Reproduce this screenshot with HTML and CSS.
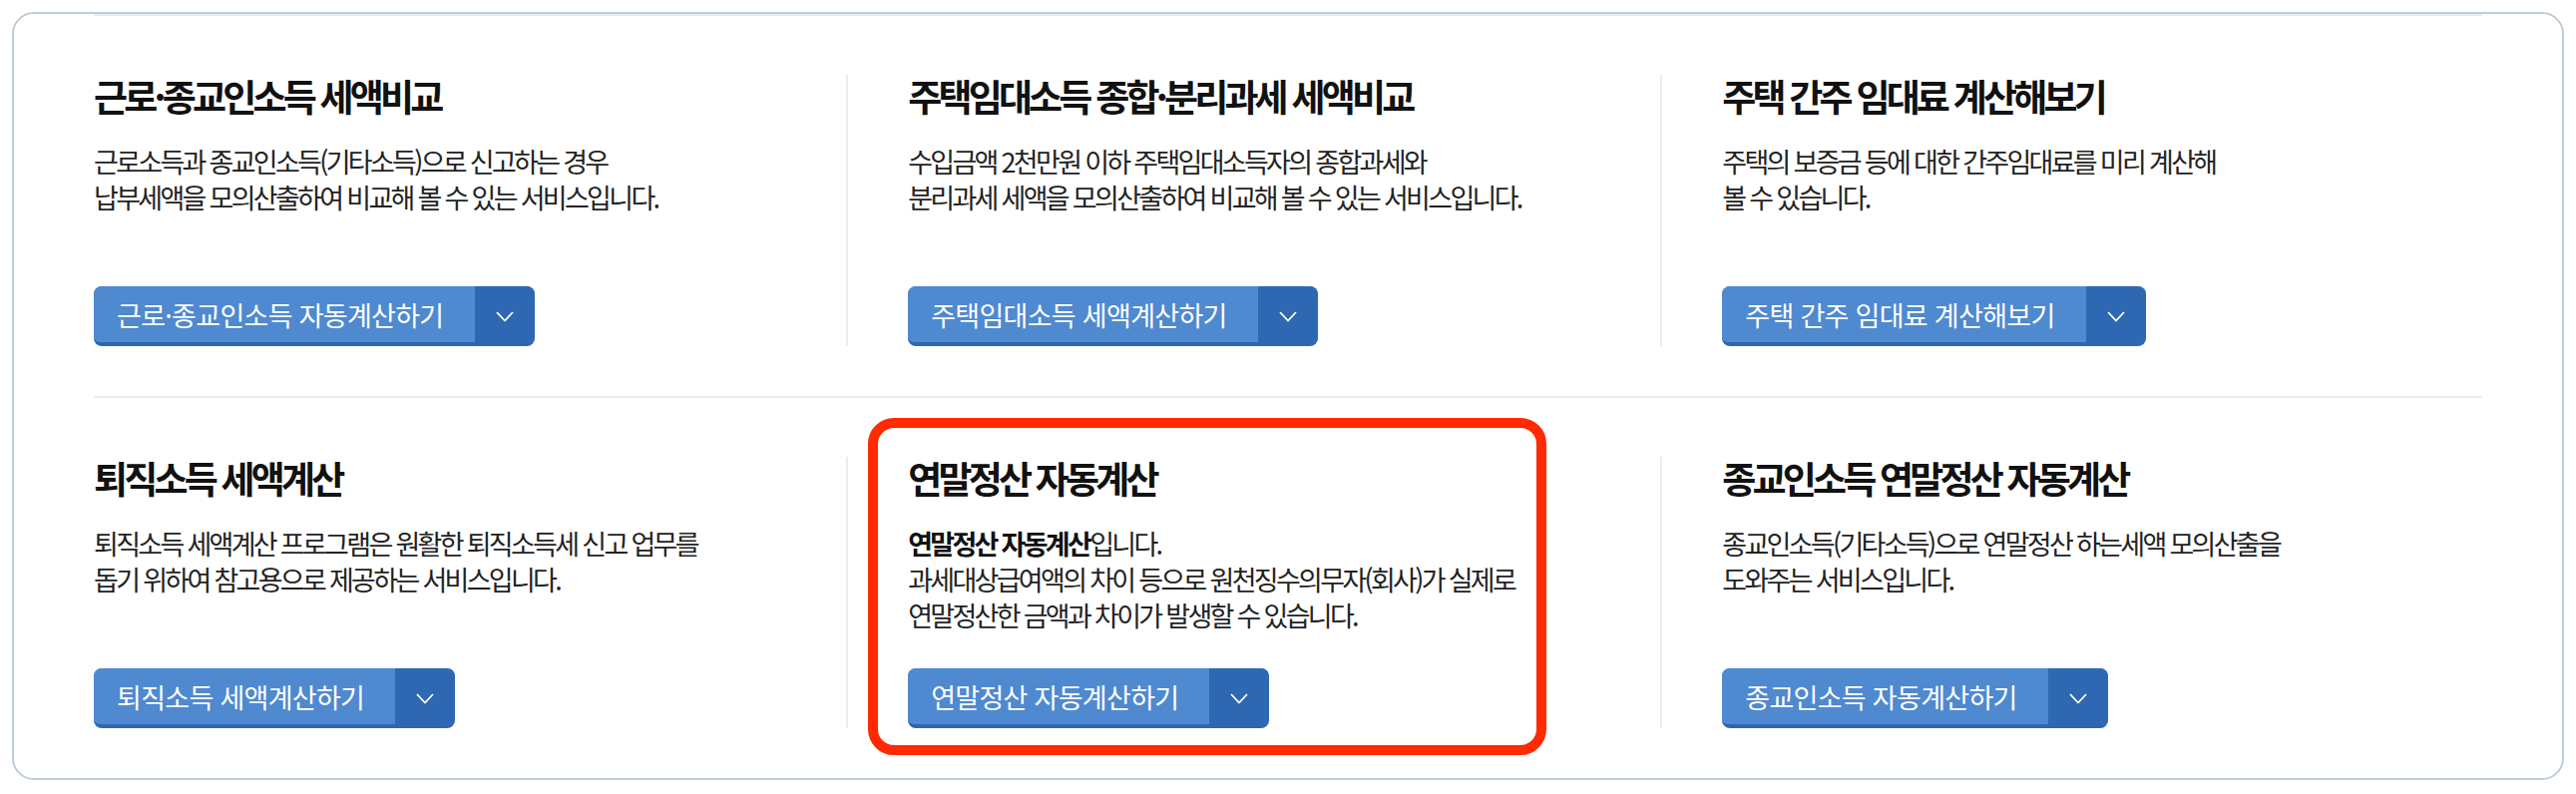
FILE: index.html
```html
<!DOCTYPE html>
<html lang="ko">
<head>
<meta charset="utf-8">
<title>세액계산 서비스</title>
<link rel="stylesheet" href="styles.css">
</head>
<body>
<div class="panel">
  <div class="row">
    <div class="item">
      <h3 class="title">근로·종교인소득 세액비교</h3>
      <p class="desc">근로소득과 종교인소득(기타소득)으로 신고하는 경우<br>납부세액을 모의산출하여 비교해 볼 수 있는 서비스입니다.</p>
      <div class="btn"><span class="btn-label">근로·종교인소득 자동계산하기</span><span class="btn-toggle"><svg width="18" height="11" viewBox="0 0 18 11"><polyline points="1,1 9,9.5 17,1" fill="none" stroke="#fff" stroke-width="1.8"/></svg></span></div>
    </div>
    <div class="item">
      <h3 class="title">주택임대소득 종합·분리과세 세액비교</h3>
      <p class="desc">수입금액 2천만원 이하 주택임대소득자의 종합과세와<br>분리과세 세액을 모의산출하여 비교해 볼 수 있는 서비스입니다.</p>
      <div class="btn"><span class="btn-label">주택임대소득 세액계산하기</span><span class="btn-toggle"><svg width="18" height="11" viewBox="0 0 18 11"><polyline points="1,1 9,9.5 17,1" fill="none" stroke="#fff" stroke-width="1.8"/></svg></span></div>
    </div>
    <div class="item item-wide">
      <h3 class="title">주택 간주 임대료 계산해보기</h3>
      <p class="desc">주택의 보증금 등에 대한 간주임대료를 미리 계산해<br>볼 수 있습니다.</p>
      <div class="btn"><span class="btn-label">주택 간주 임대료 계산해보기</span><span class="btn-toggle"><svg width="18" height="11" viewBox="0 0 18 11"><polyline points="1,1 9,9.5 17,1" fill="none" stroke="#fff" stroke-width="1.8"/></svg></span></div>
    </div>
  </div>
  <div class="row">
    <div class="item">
      <h3 class="title">퇴직소득 세액계산</h3>
      <p class="desc">퇴직소득 세액계산 프로그램은 원활한 퇴직소득세 신고 업무를<br>돕기 위하여 참고용으로 제공하는 서비스입니다.</p>
      <div class="btn"><span class="btn-label">퇴직소득 세액계산하기</span><span class="btn-toggle"><svg width="18" height="11" viewBox="0 0 18 11"><polyline points="1,1 9,9.5 17,1" fill="none" stroke="#fff" stroke-width="1.8"/></svg></span></div>
    </div>
    <div class="item item-marked">
      <span class="highlight"></span>
      <h3 class="title">연말정산 자동계산</h3>
      <p class="desc"><strong>연말정산 자동계산</strong>입니다.<br>과세대상급여액의 차이 등으로 원천징수의무자(회사)가 실제로<br>연말정산한 금액과 차이가 발생할 수 있습니다.</p>
      <div class="btn"><span class="btn-label">연말정산 자동계산하기</span><span class="btn-toggle"><svg width="18" height="11" viewBox="0 0 18 11"><polyline points="1,1 9,9.5 17,1" fill="none" stroke="#fff" stroke-width="1.8"/></svg></span></div>
    </div>
    <div class="item item-wide">
      <h3 class="title">종교인소득 연말정산 자동계산</h3>
      <p class="desc">종교인소득(기타소득)으로 연말정산 하는세액 모의산출을<br>도와주는 서비스입니다.</p>
      <div class="btn"><span class="btn-label">종교인소득 자동계산하기</span><span class="btn-toggle"><svg width="18" height="11" viewBox="0 0 18 11"><polyline points="1,1 9,9.5 17,1" fill="none" stroke="#fff" stroke-width="1.8"/></svg></span></div>
    </div>
  </div>
</div>
</body>
</html>
```

FILE: styles.css
```css
html, body {
  margin: 0;
  padding: 0;
  background: #ffffff;
}

body {
  padding: 12px;
  font-family: "Noto Sans CJK KR", "Noto Sans", sans-serif;
  color: #222;
}

.panel {
  border: 2px solid #bfcdd8;
  border-radius: 22px;
  padding: 0 80px;
  background: #fff;
}

.row {
  display: flex;
  border-top: 2px solid #ececec;
  padding: 59px 0 50px;
}

.item {
  flex: 1 1 0;
  min-width: 0;
  height: 272px;
  display: flex;
  flex-direction: column;
  align-items: flex-start;
  position: relative;
}

.item + .item {
  border-left: 2px solid #ececec;
  padding-left: 60px;
}

.item-wide {
  flex-grow: 1.01;
}

.title {
  margin: 0 0 26px;
  font-size: 37px;
  line-height: 43px;
  font-weight: 700;
  letter-spacing: -3.8px;
  color: #111;
  white-space: nowrap;
}

.desc {
  margin: 0;
  font-size: 27px;
  line-height: 36px;
  font-weight: 400;
  letter-spacing: -2.7px;
  color: #222;
  white-space: nowrap;
}

.desc strong {
  font-weight: 700;
  color: #111;
}

.btn {
  margin-top: auto;
  display: inline-flex;
  height: 56px;
  border-bottom: 4px solid #2e66b0;
  border-radius: 8px;
  overflow: hidden;
  background: #4f89d0;
}

.btn-label {
  display: flex;
  align-items: center;
  padding: 0 31px 0 23px;
  font-size: 27px;
  letter-spacing: -0.7px;
  color: #fff;
  white-space: nowrap;
  background: #4f89d0;
}

.btn-toggle {
  width: 60px;
  display: flex;
  align-items: center;
  justify-content: center;
  background: #2e68b2;
  padding-top: 4px;
  box-sizing: border-box;
}

.highlight {
  position: absolute;
  left: 20px;
  top: -39px;
  width: 680px;
  height: 338px;
  box-sizing: border-box;
  border: 10px solid #ff2a00;
  border-radius: 26px;
  pointer-events: none;
}
```
